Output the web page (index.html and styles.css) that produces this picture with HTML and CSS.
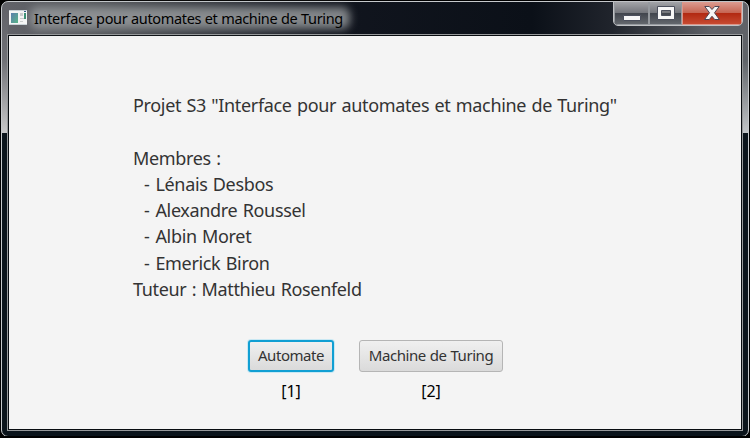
FILE: index.html
```html
<!DOCTYPE html>
<html lang="fr">
<head>
<meta charset="utf-8">
<title>Interface pour automates et machine de Turing</title>
<link rel="stylesheet" href="styles.css">
</head>
<body>
<div class="window">
  <header class="titlebar">
    <svg class="app-icon" width="18" height="15" viewBox="0 0 18 15">
      <defs><linearGradient id="g" x2="1" y2="1"><stop stop-color="#5b7fae"/><stop offset="1" stop-color="#59b588"/></linearGradient></defs>
      <path fill="#f4f5f5" d="M0 0h18v15H0z"/>
      <path fill="#c9d2d6" d="M0 0h18v1H0zM0 14h18v1H0z"/>
      <path fill="url(#g)" d="M2 3h7v10H2z"/>
      <path fill="#c9cccc" d="M11 3h3v3h-3zM11 8h4v1h-4zM11 11h3v1h-3z"/>
      <path fill="#3c9276" d="M15 3h2v6h-2z"/><path fill="#335d87" d="M15 1h2v1h-2z"/>
    </svg>
    <h1 class="title">Interface pour automates et machine de Turing</h1>
    <div class="controls">
      <span class="control minimize"><svg width="18" height="6" viewBox="0 0 18 6"><path d="M.5 .5h17v5H.5z" fill="#f6f6f6" stroke="#4b4f5c"/></svg></span>
      <span class="control maximize"><svg width="18" height="14" viewBox="0 0 18 14"><path fill-rule="evenodd" d="M.5 .5h17v13H.5zM4.500 4.500v5h9v-5z" fill="#f6f6f6" stroke="#4b4f5c"/></svg></span>
      <span class="control close"><svg width="16" height="14" viewBox="0 0 16 14"><path d="M.8.5h4.500L8 3.500 10.700.5h4.500L10.500 6.800l4.900 6.700h-4.700L8 10.300l-2.700 3.200H.6l4.900-6.700z" fill="#f6f6f6" stroke="#4d4654"/></svg></span>
    </div>
  </header>
  <main class="client">
    <div class="credits">
      <p class="line project">Projet S3 "Interface pour automates et machine de Turing"</p>
      <p class="line members">Membres :</p>
      <ul class="list">
        <li class="line"><span class="dash">-</span> Lénais Desbos</li>
        <li class="line"><span class="dash">-</span> Alexandre Roussel</li>
        <li class="line"><span class="dash">-</span> Albin Moret</li>
        <li class="line"><span class="dash">-</span> Emerick Biron</li>
      </ul>
      <p class="line">Tuteur : Matthieu Rosenfeld</p>
    </div>
    <div class="choices">
      <div class="choice"><button class="button focused">Automate</button><span class="mark">[1]</span></div>
      <div class="choice"><button class="button wide">Machine de Turing</button><span class="mark second">[2]</span></div>
    </div>
  </main>
</div>
</body>
</html>
```
FILE: styles.css
```css
* { box-sizing: border-box; }
body {
  margin: 0;
  background: #000;
  font-family: "Noto Sans", "Open Sans", sans-serif;
}
.window {
  width: 748px;
  height: 436px;
  margin: 0 1px;
  padding: 0 5px 5px;
  border: 1px solid #c6c9cc;
  border-radius: 7px;
  background:
    linear-gradient(#606167, #707176 45%, #c8c8c9) 0 0 / 6px 131px no-repeat,
    linear-gradient(#606167, #606469 45%, #c2c5c8) 100% 0 / 6px 131px no-repeat,
    linear-gradient(90deg, #626369, #55585c 90px, #11151e 330px, #0b1018 530px, #20242c 610px, #5e6167 710px) 0 0 / 100% 34px no-repeat,
    #0b141b;
  position: relative;
  top: 1px;
}
.titlebar {
  display: flex;
  height: 32px;
  margin: 0;
  padding-left: 2px;
}
.app-icon { margin-top: 8px; position: relative; z-index: 1; }
.title {
  position: relative;
  z-index: 0;
  height: 22px;
  margin: 5px 0 0 7px;
  color: #000;
  font-size: 14.5px;
  font-weight: 400;
  line-height: 22px;
  letter-spacing: -.35px;
  word-spacing: .3px;
  white-space: nowrap;
}
.title::before {
  content: "";
  position: absolute;
  z-index: -1;
  inset: 0 -7px 0 -4px;
  border-radius: 8px;
  background: rgba(150, 154, 156, .85);
  filter: blur(4px);
}
.controls {
  display: flex;
  height: 25px;
  margin: -1px 0 0 auto;
  border: 1px solid #c0c2c5;
  border-radius: 0 0 5px 5px;
  overflow: hidden;
}
.control {
  display: flex;
  justify-content: center;
  align-items: center;
  width: 35px;
  border: 1px solid #969a9f;
  border-top: 0;
  background: linear-gradient(#a3a4a8, #74767c 48%, #40444c 50%, #63676d);
}
.minimize svg { margin-top: 9px; }
.maximize { width: 33px; }
.close {
  width: 60px;
  border-color: #dd9588;
  background: linear-gradient(#dc9c91, #c66654 48%, #b12811 50%, #c74a31);
}
.client {
  height: 397px;
  width: 736px;
  border: 1px solid #97999b;
  outline: 1px solid #080c10;
  outline-offset: -2px;
  background: #f4f4f4;
  padding: 57px 0 0 125px;
}
.credits { color: #333; font-size: 18px; letter-spacing: -.34px; word-spacing: 1px; }
.line { margin: 0; line-height: 26.3px; white-space: pre; }
.project { margin-bottom: 26.3px; }
.list { margin: 0; padding: 0 0 0 11px; list-style: none; }
.dash { letter-spacing: .3px; }
.choices { display: flex; gap: 25px; margin: 38px 0 0 115px; }
.choice { display: flex; flex-direction: column; align-items: center; }
.button {
  width: 86px;
  height: 32px;
  padding: 0 0 2px;
  border: 1px solid #b5b5b5;
  border-radius: 3px;
  background: linear-gradient(#f0f0f0, #dadada);
  color: #333;
  font: 15px/26px "Noto Sans", sans-serif;
  letter-spacing: -.45px;
  word-spacing: .5px;
}
.focused {
  border: 2px solid #119fd3;
  box-shadow: 0 0 0 1px #c9e8f3;
}
.wide { width: 144px; }
.mark {
  margin-top: 8px;
  color: #000;
  font-size: 16px;
  line-height: 22px;
}
```
